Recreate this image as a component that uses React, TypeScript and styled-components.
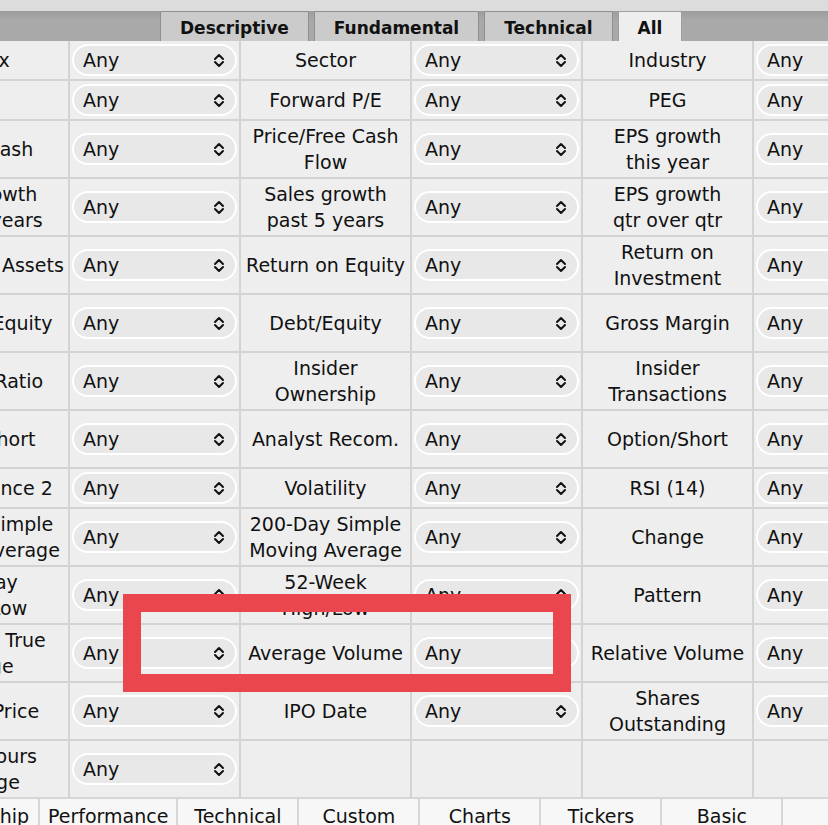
import React from "react";
import styled, { createGlobalStyle } from "styled-components";

const GlobalStyle = createGlobalStyle`
  html, body { margin: 0; padding: 0; background: #eeeeee; }
  body { font-family: "DejaVu Sans", Verdana, sans-serif; color: #111; overflow: hidden; }
`;

const Page = styled.div`
  position: relative;
  width: 828px;
  height: 825px;
  overflow: hidden;
  background: #eeeeee;
`;

const Header = styled.div`
  display: flex;
  flex-direction: column;
`;

const TopStrip = styled.div`
  height: 11px;
  background: #dcdcdc;
`;

const TabBand = styled.div`
  height: 30px;
  display: flex;
  align-items: stretch;
  gap: 5px;
  padding-left: 160px;
  background: linear-gradient(#9c9c9c, #a9a9a9 30%, #a9a9a9);
`;

const Tab = styled.div<{ $active?: boolean }>`
  display: flex;
  align-items: center;
  justify-content: center;
  padding: 2px 19px 0;
  font-weight: bold;
  font-size: 17px;
  color: #111;
  background: ${(p) => (p.$active ? "#eeeeee" : "#cbcbcb")};
  border: 1px solid ${(p) => (p.$active ? "#a0a0a0" : "#8f8f8f")};
  border-bottom: none;
  border-radius: 2px 2px 0 0;
`;

const Grid = styled.div`
  display: grid;
  grid-template-columns: repeat(8, 169px);
  gap: 2px;
  background: #d3d3d3;
  margin-left: -101px;
  width: max-content;
`;

const Cell = styled.div`
  background: #eeeeee;
  min-height: 38px;
  padding: 2px;
  box-sizing: border-box;
  display: flex;
  align-items: center;
  justify-content: center;
  overflow: hidden;
`;

const Label = styled.div`
  font-size: 19px;
  line-height: 26px;
  text-align: center;
  white-space: nowrap;
  color: #111;
`;

const Select = styled.div`
  width: 100%;
  height: 32px;
  box-sizing: border-box;
  border: 2px solid #ffffff;
  border-radius: 16px;
  background: #e8e8e8;
  display: flex;
  align-items: center;
  justify-content: space-between;
  padding: 0 10px 0 9px;
  font-size: 19px;
  color: #111;
`;

const Chevron = () => (
  <svg width="12" height="15" viewBox="0 0 12 15" fill="none">
    <path d="M2 6 L6 2 L10 6" stroke="#111" strokeWidth="2" strokeLinecap="round" strokeLinejoin="round" />
    <path d="M2 9 L6 13 L10 9" stroke="#111" strokeWidth="2" strokeLinecap="round" strokeLinejoin="round" />
  </svg>
);

const BottomBar = styled.div`
  display: flex;
  margin-left: -81px;
  border-top: 2px solid #d6d6d6;
  background: #f7f7f7;
  height: 40px;
  width: max-content;
`;

const BottomTab = styled.div`
  flex-shrink: 0;
  min-width: 121px;
  box-sizing: border-box;
  padding: 5px 8px 0;
  text-align: center;
  font-size: 19px;
  line-height: 24px;
  white-space: nowrap;
  color: #111;
  border-right: 2px solid #d6d6d6;
`;

const Highlight = styled.div`
  position: absolute;
  left: 123px;
  top: 594px;
  width: 448px;
  height: 98px;
  box-sizing: border-box;
  border: 18px solid #e9464d;
`;

const rows: (string | null)[][] = [
  ["Index", "Sector", "Industry", "Country"],
  ["P/E", "Forward P/E", "PEG", "P/S"],
  ["Price/Cash", "Price/Free Cash\nFlow", "EPS growth\nthis year", "EPS growth\nnext year"],
  ["EPS growth\nnext 5 years", "Sales growth\npast 5 years", "EPS growth\nqtr over qtr", "Sales growth\nqtr over qtr"],
  ["Return on Assets", "Return on Equity", "Return on\nInvestment", "Current Ratio"],
  ["LT Debt/Equity", "Debt/Equity", "Gross Margin", "Operating\nMargin"],
  ["Payout Ratio", "Insider\nOwnership", "Insider\nTransactions", "Institutional\nOwnership"],
  ["Float Short", "Analyst Recom.", "Option/Short", "Institutional\nTransactions"],
  ["Performance 2", "Volatility", "RSI (14)", "Gap"],
  ["50-Day Simple\nMoving Average", "200-Day Simple\nMoving Average", "Change", "Change from\nOpen"],
  ["50-Day\nHigh/Low", "52-Week\nHigh/Low", "Pattern", "Candlestick"],
  ["Average True\nRange", "Average Volume", "Relative Volume", "Current Volume"],
  ["Target Price", "IPO Date", "Shares\nOutstanding", "Float"],
  ["After-Hours\nChange", null, null, null],
];

const bottomTabs = ["Ownership", "Performance", "Technical", "Custom", "Charts", "Tickers", "Basic", "TA"];

export default function App() {
  return (
    <Page>
      <GlobalStyle />
      <Header>
        <TopStrip />
        <TabBand>
          <Tab>Descriptive</Tab>
          <Tab>Fundamental</Tab>
          <Tab>Technical</Tab>
          <Tab $active>All</Tab>
        </TabBand>
      </Header>
      <Grid>
        {rows.map((row, ri) =>
          row.map((label, ci) => (
            <React.Fragment key={`${ri}-${ci}`}>
              <Cell>
                {label && (
                  <Label>
                    {label.split("\n").map((l, i) => (
                      <div key={i}>{l}</div>
                    ))}
                  </Label>
                )}
              </Cell>
              <Cell>
                {label && (
                  <Select>
                    <span>Any</span>
                    <Chevron />
                  </Select>
                )}
              </Cell>
            </React.Fragment>
          ))
        )}
      </Grid>
      <BottomBar>
        {bottomTabs.map((t) => (
          <BottomTab key={t}>{t}</BottomTab>
        ))}
      </BottomBar>
      <Highlight />
    </Page>
  );
}
